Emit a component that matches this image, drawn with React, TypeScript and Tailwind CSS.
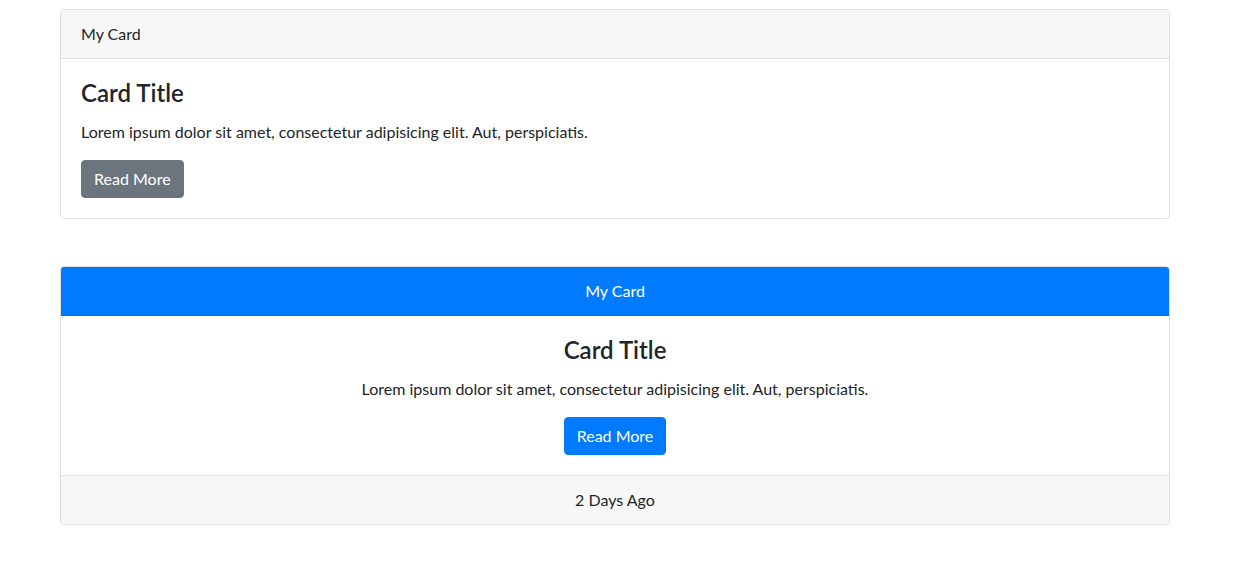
const Card = ({ centered, primary, footer }: { centered?: boolean; primary?: boolean; footer?: string }) => {
  return (
    <div className="flex flex-col rounded border border-[#dfdfdf] bg-white overflow-hidden">
      <div
        className={
          primary
            ? "px-5 py-3 leading-6 bg-[#007bff] border-b border-[#006ce0] text-white text-center"
            : "px-5 py-3 leading-6 bg-[#f7f7f7] border-b border-[#dfdfdf]"
        }
      >
        My Card
      </div>
      <div className={centered ? "p-5 text-center" : "p-5"}>
        <h4 className="text-2xl leading-[1.2] font-semibold mb-3">Card Title</h4>
        <p className="leading-6 mb-4">Lorem ipsum dolor sit amet, consectetur adipisicing elit. Aut, perspiciatis.</p>
        <button
          className={
            primary
              ? "px-3 py-1.5 leading-6 rounded border border-[#007bff] text-white bg-[#007bff]"
              : "px-3 py-1.5 leading-6 rounded border border-[#6c757d] text-white bg-[#6c757d]"
          }
        >
          Read More
        </button>
      </div>
      {footer && (
        <div className="px-5 py-3 leading-6 bg-[#f7f7f7] border-t border-[#dfdfdf] text-center">{footer}</div>
      )}
    </div>
  );
};

export default function App() {
  return (
    <div className="min-h-[562px] bg-white text-[#212529] text-base font-['Lato',sans-serif]">
      <div className="w-[1110px] ml-[60px] pt-[9px] flex flex-col gap-[47px]">
        <Card />
        <Card centered primary footer="2 Days Ago" />
      </div>
    </div>
  );
}
